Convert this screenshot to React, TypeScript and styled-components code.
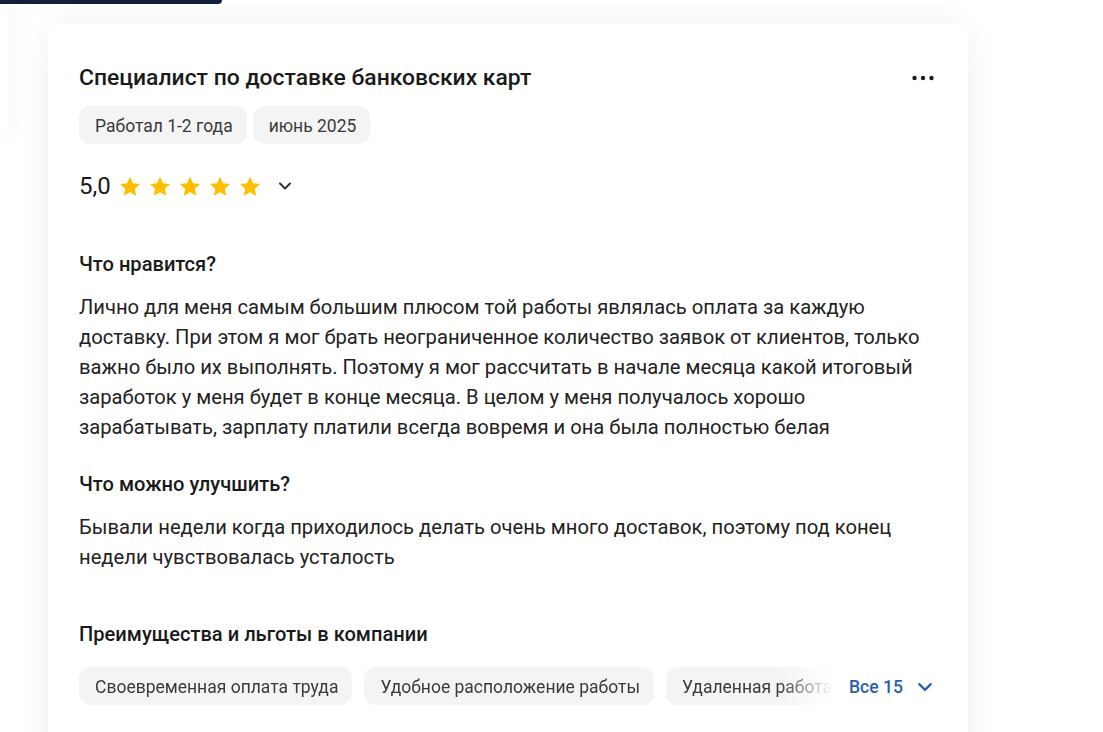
import React from "react";
import styled, { createGlobalStyle } from "styled-components";

const GlobalStyle = createGlobalStyle`
  html, body { margin: 0; padding: 0; background: #ffffff; }
  body { font-family: Roboto, "Noto Sans", Arial, sans-serif; color: #1a1a1a; }
  * { box-sizing: border-box; }
`;

const Page = styled.div`
  position: relative;
  display: grid;
  grid-template-columns: 8px 920px;
  grid-template-rows: 4px auto;
  column-gap: 40px;
  row-gap: 20px;
  height: 732px;
  overflow: hidden;
`;

const DarkBar = styled.div`
  position: absolute;
  left: 0;
  top: 0;
  width: 222px;
  height: 4px;
  background: #13203a;
  border-bottom-right-radius: 10px;
  z-index: 2;
`;

const SideCard = styled.div`
  grid-column: 1;
  grid-row: 1 / span 2;
  align-self: start;
  height: 130px;
  background: #fff;
  border-bottom-right-radius: 12px;
  box-shadow: 0 4px 26px rgba(0, 0, 0, 0.1);
`;

const TopCard = styled.div`
  grid-column: 2;
  grid-row: 1;
  width: 912px;
  height: 4px;
  background: #fff;
  border-bottom-left-radius: 16px;
  border-bottom-right-radius: 16px;
  box-shadow: 0 4px 28px rgba(0, 0, 0, 0.08);
`;

const Card = styled.article`
  grid-column: 2;
  grid-row: 2;
  background: #fff;
  border-radius: 16px 16px 0 0;
  box-shadow: 0 4px 32px rgba(0, 0, 0, 0.07);
  padding: 40px 32px 40px 31px;
  min-height: 760px;
`;

const TitleRow = styled.div`
  display: flex;
  align-items: center;
  justify-content: space-between;
`;

const Title = styled.h2`
  margin: 0;
  font-size: 22.9px;
  line-height: 28px;
  font-weight: 500;
  color: #1a1a1a;
`;

const IconButton = styled.button`
  border: 0;
  background: none;
  padding: 0;
  width: 24px;
  height: 24px;
  display: flex;
  align-items: center;
  justify-content: center;
  cursor: pointer;
`;

const TagRow = styled.div<{ $gap: number; $top: number }>`
  display: flex;
  gap: ${(p) => p.$gap}px;
  margin-top: ${(p) => p.$top}px;
`;

const Tag = styled.span`
  flex: none;
  display: inline-flex;
  align-items: center;
  height: 38px;
  padding: 1px 14px 0 16px;
  border-radius: 12px;
  background: #f4f4f4;
  color: #3a3a3a;
  font-size: 17.5px;
  line-height: 22px;
  white-space: nowrap;
`;

const RatingRow = styled.div`
  display: flex;
  align-items: center;
  margin-top: 28px;
  height: 28px;
`;

const Score = styled.span`
  font-size: 24px;
  line-height: 28px;
  color: #1a1a1a;
  margin-right: 8px;
`;

const Stars = styled.div`
  display: flex;
  gap: 8px;
  margin-right: 17px;
`;

const Chevron = styled.span<{ $color: string }>`
  display: inline-flex;
  color: ${(p) => p.$color};
`;

const Section = styled.section<{ $top: number }>`
  margin-top: ${(p) => p.$top}px;
`;

const Heading = styled.h3`
  margin: 0;
  font-size: 20.1px;
  line-height: 24px;
  font-weight: 500;
  color: #1a1a1a;
`;

const Text = styled.p`
  margin: 16px 0 0;
  font-size: 20.2px;
  line-height: 30px;
  color: #222;
`;

const BenefitsRow = styled.div`
  display: flex;
  align-items: center;
  gap: 12px;
  margin-top: 21px;
`;

const ChipsViewport = styled.div`
  width: 758px;
  flex: none;
  display: flex;
  gap: 12px;
  overflow: hidden;
  -webkit-mask-image: linear-gradient(to right, #000 calc(100% - 58px), transparent calc(100% - 4px));
  mask-image: linear-gradient(to right, #000 calc(100% - 58px), transparent calc(100% - 4px));
`;

const ShowAll = styled.button`
  display: flex;
  align-items: center;
  gap: 14px;
  border: 0;
  background: none;
  padding: 2px 0 0;
  font-family: inherit;
  font-size: 17.6px;
  font-weight: 500;
  color: #2c5faa;
  cursor: pointer;
`;

const Star = () => (
  <svg width="22" height="21" viewBox="0 0 24 23">
    <path
      d="M12 0.8l3.3 7.1 7.7 0.9-5.7 5.3 1.5 7.6L12 17.9l-6.8 3.8 1.5-7.6L1 8.8l7.7-0.9z"
      fill="#ffbf00"
    />
  </svg>
);

const ChevronDown = ({ size = 14 }: { size?: number }) => (
  <svg width={size} height={size} viewBox="0 0 14 14" fill="none">
    <path d="M2 4.5l5 5 5-5" stroke="currentColor" strokeWidth="2" strokeLinecap="round" strokeLinejoin="round" />
  </svg>
);

const Dots = () => (
  <svg width="24" height="8" viewBox="0 0 24 8">
    <circle cx="2.5" cy="4" r="2.2" fill="#1a1a1a" />
    <circle cx="11" cy="4" r="2.2" fill="#1a1a1a" />
    <circle cx="19.5" cy="4" r="2.2" fill="#1a1a1a" />
  </svg>
);

export default function App() {
  return (
    <>
      <GlobalStyle />
      <Page>
        <DarkBar />
        <SideCard />
        <TopCard />
        <Card>
          <TitleRow>
            <Title>Специалист по доставке банковских карт</Title>
            <IconButton aria-label="Ещё">
              <Dots />
            </IconButton>
          </TitleRow>
          <TagRow $gap={6} $top={14}>
            <Tag>Работал 1-2 года</Tag>
            <Tag>июнь 2025</Tag>
          </TagRow>
          <RatingRow>
            <Score>5,0</Score>
            <Stars>
              {[0, 1, 2, 3, 4].map((i) => (
                <Star key={i} />
              ))}
            </Stars>
            <Chevron $color="#333">
              <ChevronDown size={14} />
            </Chevron>
          </RatingRow>
          <Section $top={52}>
            <Heading>Что нравится?</Heading>
            <Text>
              Лично для меня самым большим плюсом той работы являлась оплата за каждую доставку. При этом я мог
              брать неограниченное количество заявок от клиентов, только важно было их выполнять. Поэтому я мог
              рассчитать в начале месяца какой итоговый заработок у меня будет в конце месяца. В целом у меня
              получалось хорошо зарабатывать, зарплату платили всегда вовремя и она была полностью белая
            </Text>
          </Section>
          <Section $top={30}>
            <Heading>Что можно улучшить?</Heading>
            <Text>
              Бывали недели когда приходилось делать очень много доставок, поэтому под конец недели
              чувствовалась усталость
            </Text>
          </Section>
          <Section $top={50}>
            <Heading>Преимущества и льготы в компании</Heading>
            <BenefitsRow>
              <ChipsViewport>
                <Tag>Своевременная оплата труда</Tag>
                <Tag>Удобное расположение работы</Tag>
                <Tag>Удаленная работа</Tag>
              </ChipsViewport>
              <ShowAll>
                Все 15
                <ChevronDown size={16} />
              </ShowAll>
            </BenefitsRow>
          </Section>
        </Card>
      </Page>
    </>
  );
}
